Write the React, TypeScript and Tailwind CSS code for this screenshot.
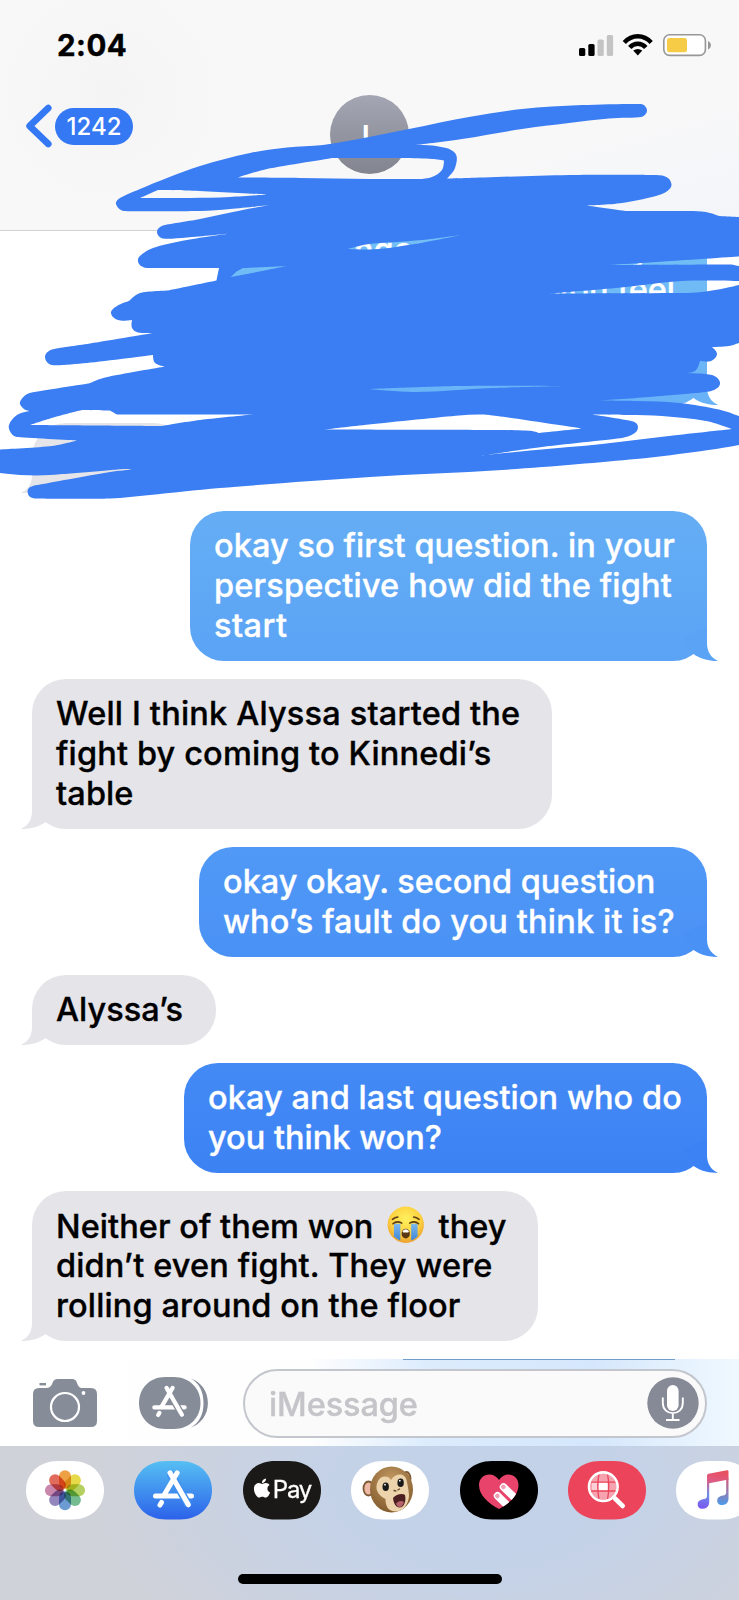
import React from "react";
import { FaApple } from "react-icons/fa";

type Pt = [number, number] | [number, number, 1];

// Closed smooth curve through the points; a third value of 1 marks a sharp corner.
function smooth(pts: Pt[]): string {
  const n = pts.length;
  const at = (i: number) => pts[(i + n) % n];
  const dist = (u: Pt, v: Pt) => Math.hypot(v[0] - u[0], v[1] - u[1]);
  let d = `M${pts[0][0]} ${pts[0][1]}`;
  for (let i = 0; i < n; i++) {
    const a = at(i);
    const b = at(i + 1);
    const p = at(i - 1);
    const q = at(i + 2);
    const len = dist(a, b);
    const tangent = (u: Pt, v: Pt, near: number) => {
      const l = dist(u, v) || 1;
      const k = Math.min(len, near * 1.5) * 0.34;
      return [((v[0] - u[0]) / l) * k, ((v[1] - u[1]) / l) * k];
    };
    const ta = a[2] ? [0, 0] : tangent(p, b, dist(p, a));
    const tb = b[2] ? [0, 0] : tangent(a, q, dist(b, q));
    d += `C${a[0] + ta[0]} ${a[1] + ta[1]} ${b[0] - tb[0]} ${b[1] - tb[1]} ${b[0]} ${b[1]}`;
  }
  return d + "Z";
}

const outline: Pt[] = [
  [641, 104], [582, 105], [522, 109], [469, 117], [409, 129], [369, 137], [323, 145], [287, 147.5], [250, 153], [200, 166], [167, 178], [140, 189],
  [120, 198], [116, 204], [124, 211], [200, 211], [230, 209], [270, 205, 1], [233, 212], [200, 219], [163, 225.5], [157, 232], [163, 238.5],
  [187, 237.5], [230, 233.5, 1], [187, 240], [153, 248], [139, 257], [139, 264], [147, 268], [219, 268, 1], [216.5, 280.5, 1], [168, 290.5, 1], [140, 293],
  [129, 301, 1], [117, 306], [111, 313], [118, 320], [132, 320, 1], [132, 328], [138, 332.5], [153, 333, 1], [90, 343.5], [52, 349.5], [45, 357],
  [52, 365], [87, 363], [153, 355, 1], [155, 363], [165, 366.5, 1], [117, 375], [100, 379], [89, 383.5, 1], [30, 393], [20, 402], [24, 409],
  [30, 411, 1], [17, 415], [9, 425], [11, 433], [17, 437], [77, 440.5, 1], [52, 446], [0, 449.5], [-10, 450, 1], [-10, 473, 1], [0, 473],
  [20, 475], [50, 475], [123, 469, 1], [133, 469.5, 1], [110, 472], [43, 484], [29, 488], [29, 496], [37, 498.5], [110, 498.5], [150, 495],
  [220, 488], [370, 477], [502, 470], [636, 459], [702, 451], [739, 445], [750, 442, 1], [750, 420, 1], [739, 416], [719, 409.5],
  [679, 403], [636, 401], [599, 400.5, 1], [649, 397], [709, 391.5], [720, 384], [712, 375], [682, 373, 1], [695, 371], [700, 361, 1], [711, 361], [717, 354],
  [712, 347, 1], [729, 346], [739, 343], [750, 340, 1], [750, 281, 1], [739, 285], [706, 291.5], [679, 293], [549, 293.5, 1], [616, 288],
  [682, 281], [739, 281], [750, 281, 1], [750, 266, 1], [739, 266], [731, 264.5], [609, 265, 1], [656, 262], [739, 256.5], [750, 256, 1], [750, 217, 1],
  [739, 217], [719, 216, 1], [706, 212], [689, 211], [626, 211, 1], [586, 205.5, 1], [622, 203], [659, 195], [671, 187], [668, 178], [656, 175], [569, 175], [469, 178],
  [447, 178.5, 1], [455, 168], [455, 153], [436, 146], [416, 145, 1], [462, 139], [522, 129], [569, 123], [609, 118.5], [641, 117], [647, 110.5],
];

const gaps: Pt[][] = [
  [[238, 177.5, 1], [267, 169], [333, 158, 1], [369, 158], [402, 158], [432, 159], [444, 160.5, 1], [442, 170], [432, 177], [421, 179, 1], [369, 179], [300, 178]],
  [[140, 198, 1], [158, 190, 1], [187, 190.5], [267, 194.5, 1], [230, 197], [190, 198]],
  [[348, 249, 1], [369, 244], [422, 240], [461, 235, 1], [426, 242], [389, 248], [369, 249.5]],
  [[231, 277, 1], [236, 272], [243, 268, 1], [287, 266, 1], [262, 271]],
  [[369, 389, 1], [459, 386], [567, 386, 1], [492, 388], [416, 392]],
  [[325, 429.5, 1], [369, 424.5], [459, 415.5], [489, 415], [582, 428.5, 1], [539, 433, 1], [532, 431], [502, 430]],
  [[592, 414.5, 1], [629, 415], [662, 416], [706, 421], [732, 429, 1], [669, 436], [602, 444], [536, 450], [482, 455.5, 1], [542, 447], [622, 438], [636, 432], [637, 424], [626, 420]],
  [[82, 410, 1], [110, 410.5, 1], [117, 414.5, 1], [253, 414.5, 1], [200, 420], [162, 426, 1], [30, 425, 1], [55, 417]],
];

const scribblePath = [outline, ...gaps].map(smooth).join("");

function Scribble() {
  return (
    <svg className="pointer-events-none absolute top-0 left-0 z-20" width="739" height="520" viewBox="0 0 739 520">
      <path d={scribblePath} fill="#3b7df2" fillRule="evenodd" />
    </svg>
  );
}

function StatusIcons() {
  return (
    <svg width="133" height="23" viewBox="579 34 133 23">
      <rect x="579" y="48" width="6.3" height="8" rx="1.6" />
      <rect x="588.3" y="44" width="6.3" height="12" rx="1.6" />
      <rect x="597.5" y="39.5" width="6.3" height="16.5" rx="1.6" fill="#c4c4c4" />
      <rect x="606.8" y="35" width="6.3" height="21" rx="1.6" fill="#c4c4c4" />
      <g fill="none" stroke="#000" strokeWidth="4.4">
        <path d="M624.3 42.5C632 34.2 643.5 34.2 651.2 42.5" />
        <path d="M629.8 47.5C634 42.4 641.6 42.4 645.8 47.5" />
      </g>
      <path d="M633.2 50.6Q637.8 47.6 642.3 50.6L637.8 55.6Z" />
      <rect x="663.8" y="34.8" width="41.6" height="20.6" rx="5.8" fill="#fff" stroke="#979797" strokeWidth="1.6" />
      <rect x="667" y="38" width="20" height="14.3" rx="2.4" fill="#f6cc47" />
      <path d="M708 41Q711 42.5 711 45.2T708 49.4Z" fill="#979797" />
    </svg>
  );
}

function Header() {
  return (
    <header className="relative z-10 h-[231px] border-b border-[#cfd1d3] bg-[#f8f8f9] bg-[radial-gradient(circle_at_110px_95px,#f4f4f5_0,#f8f8f900_110px),linear-gradient(165deg,#f8f8f900_70%,#f2f5f9_100%)]">
      <div className="flex h-[90px] items-start justify-between pt-[34px] pr-[27px] pl-[57px]">
        <span className="w-[72px] text-[29.5px] leading-[23px] font-bold tracking-[0.5px] whitespace-nowrap text-black [-webkit-text-stroke:0.4px_currentColor]">2:04</span>
        <StatusIcons />
      </div>
      <div className="grid grid-cols-3 items-start px-[26px]">
        <div className="flex items-center pt-[14px]">
          <svg width="29" height="44" viewBox="0 0 29 44">
            <path d="M22.3 4L3.6 22L22.3 40" fill="none" stroke="#3478f3" strokeWidth="6.6" strokeLinecap="round" strokeLinejoin="round" />
          </svg>
          <span className="flex h-[37px] w-[78px] items-center justify-center rounded-full bg-[#3478f3] pt-px text-[24px] font-medium text-white">1242</span>
        </div>
        <div className="mx-auto mt-[5px] h-[79px] w-[79px] rounded-full bg-linear-to-b from-[#a4a7b3] to-[#82858f] pt-[23px] pl-[31px] text-[35px] leading-[40px] font-medium text-white">
          L
        </div>
      </div>
    </header>
  );
}

function Tail({ side, className }: { side: "left" | "right"; className: string }) {
  return (
    <svg
      className={side === "right" ? `absolute -right-[11px] bottom-0 ${className}` : `absolute bottom-0 -left-[11px] -scale-x-100 ${className}`}
      width="39"
      height="36"
      viewBox="-28 -36 39 36"
    >
      <path d="M0 -34L0 -18C0 -9 4 -3.5 11 0C3 0 -6 -1.500 -13.500 -7L-24 -24Z" fill="currentColor" />
    </svg>
  );
}

function Bubble({ side, box, tail, children }: { side: "left" | "right"; box: string; tail: string; children?: React.ReactNode }) {
  return (
    <div
      className={`relative shrink-0 rounded-[34px] px-[24px] py-[15px] text-[32.5px] leading-[40px] font-medium whitespace-nowrap [-webkit-text-stroke:0.35px_currentColor] ${
        side === "right" ? "self-end text-white" : "self-start bg-[#e5e4e9] text-black"
      } ${box}`}
    >
      {children}
      <Tail side={side} className={tail} />
    </div>
  );
}

function Crying() {
  return (
    <svg className="mx-[13.8px] inline-block align-[-6px]" width="37.500" height="37.500" viewBox="0 0 38 38" role="img" aria-label="loudly crying face">
      <defs>
        <radialGradient id="face" cx=".5" cy=".35" r=".65">
          <stop offset="0" stopColor="#fff15f" />
          <stop offset=".65" stopColor="#fccf3e" />
          <stop offset="1" stopColor="#eda02f" />
        </radialGradient>
        <linearGradient id="tear" x1="0" y1="0" x2="0" y2="1">
          <stop offset="0" stopColor="#7fb9ee" />
          <stop offset="1" stopColor="#3c86d8" />
        </linearGradient>
      </defs>
      <circle cx="19" cy="19" r="18.4" fill="url(#face)" />
      <path d="M7 18H13.5V35Q9.5 33.3 7 31ZM24.5 18H31V31Q28.5 33.6 24.5 35Z" fill="url(#tear)" />
      <path d="M5.5 13.5Q8 11.5 11 11.2M32.5 13.5Q30 11.5 27 11.2M6 18Q10 14.5 15 17.4M32 18Q28 14.5 23 17.4" fill="none" stroke="#5d3b12" strokeWidth="1.6" strokeLinecap="round" />
      <ellipse cx="19" cy="28" rx="4.2" ry="5" fill="#5b3814" />
      <path d="M15.7 25.5Q19 21.5 22.3 25.5L21.5 26.8H16.5Z" fill="#fff" />
    </svg>
  );
}

function Conversation() {
  return (
    <main className="-mt-[16px] flex h-[1144px] flex-col gap-[18px] overflow-hidden px-[32px]">
      <Bubble side="right" box="h-[190px] w-[482px] bg-linear-to-b from-[#74c0f5] to-[#69b2f7]" tail="text-[#69b2f7]">
        <div className="flex justify-between pr-[33px] pl-[105px]">
          <span>nges</span>
          <span>y</span>
        </div>
        <div className="pr-[8px] text-right">you feel</div>
      </Bubble>
      <Bubble side="left" box="h-[70px] w-[156px]" tail="text-[#e5e4e9]" />
      <Bubble side="right" box="h-[150px] w-[517px] bg-linear-to-b from-[#65aef5] to-[#5ba3f5]" tail="text-[#5ba3f5]">
        <p className="tracking-[0.08px]">okay so first question. in your</p>
        <p className="tracking-[0.16px]">perspective how did the fight</p>
        <p className="tracking-[0.4px]">start</p>
      </Bubble>
      <Bubble side="left" box="h-[150px] w-[520px]" tail="text-[#e5e4e9]">
        <p className="tracking-[0.18px]">Well I think Alyssa started the</p>
        <p className="tracking-[0.15px]">fight by coming to Kinnedi’s</p>
        <p className="tracking-[0.1px]">table</p>
      </Bubble>
      <Bubble side="right" box="h-[110px] w-[508px] bg-linear-to-b from-[#5099f6] to-[#4a91f5]" tail="text-[#4a91f5]">
        <p>okay okay. second question</p>
        <p className="tracking-[0.17px]">who’s fault do you think it is?</p>
      </Bubble>
      <Bubble side="left" box="h-[70px] w-[184px]" tail="text-[#e5e4e9]">
        <p>Alyssa’s</p>
      </Bubble>
      <Bubble side="right" box="h-[110px] w-[523px] bg-linear-to-b from-[#438af5] to-[#3d82f4]" tail="text-[#3d82f4]">
        <p className="tracking-[0.08px]">okay and last question who do</p>
        <p>you think won?</p>
      </Bubble>
      <Bubble side="left" box="h-[150px] w-[506px]" tail="text-[#e5e4e9]">
        <p className="h-[40px] tracking-[0.06px]">
          Neither of them won<Crying />they
        </p>
        <p className="tracking-[0.13px]">didn’t even fight. They were</p>
        <p className="tracking-[0.13px]">rolling around on the floor</p>
      </Bubble>
    </main>
  );
}

function StoreMark({ gap }: { gap: string }) {
  return (
    <g fill="none" stroke="#fff" strokeWidth="5" strokeLinecap="round">
      <path d="M21.5 35H57.5M27.5 41.5L26 44" />
      <path d="M36 12L54.3 43.8" stroke={gap} strokeWidth="8" strokeLinecap="butt" />
      <path d="M43.2 11.8L29.8 34.6M36 11.8L54.3 43.8" />
    </g>
  );
}

function Compose() {
  return (
    <section className="h-[87px] bg-[linear-gradient(90deg,#ffffff_0%,#fefefe_42%,#dcecfd_58%,#d5e7fc_80%,#e9f4fe_95%,#f0f8ff_100%)]">
      <div className="ml-[403px] h-px w-[272px] bg-[#6f9ec9]" />
      <div className="flex h-[86px] items-center pr-[32px] pl-[33px]">
        <svg width="64" height="50" viewBox="0 0 64 50">
          <path d="M6 10H13Q18 10 19.500 5Q20.500 1 25 1H39Q43 1 44 5Q45.500 10 49 10H58Q64 10 64 16V43Q64 49 58 49H6Q0 49 0 43V16Q0 10 6 10Z" fill="#868d99" />
          <circle cx="32" cy="29" r="14" fill="none" stroke="#fff" strokeWidth="2.2" />
          <circle cx="50.500" cy="15" r="1.900" fill="#fff" />
          <rect x="6.500" y="5" width="6.500" height="2.400" fill="#868d99" />
        </svg>
        <svg className="ml-[42px]" width="70" height="52" viewBox="0 0 70 52">
          <path d="M26 0H35C50 0 61.500 11 61.500 26S50 52 35 52H26C11 52 0 41 0 26S11 0 26 0Z" fill="#868d99" />
          <path d="M51.700 1.500C62 5 68.900 14 68.900 26S62 47 51.700 50.500C60 46 64.500 38 64.500 26S60 6 51.700 1.500Z" fill="#868d99" />
          <g transform="translate(-2.7 1) scale(.84)">
            <StoreMark gap="#868d99" />
          </g>
        </svg>
        <div className="ml-[34px] flex h-[69px] flex-1 items-center justify-between rounded-full border-2 border-[#c3c6cc] bg-[#fafafa] pr-[6px] pl-[24px]">
          <span className="mt-[4px] text-[32.5px] leading-[36px] font-medium tracking-[-0.1px] text-[#c5c5c9] [-webkit-text-stroke:0.4px_currentColor]">iMessage</span>
          <svg className="-mt-[1px]" width="52" height="52" viewBox="0 0 52 52">
            <circle cx="26" cy="26" r="25.700" fill="#868a96" />
            <rect x="20" y="8" width="11.600" height="26" rx="5.800" fill="#fff" />
            <path d="M15.800 20.500V26C15.800 39.500 35.800 39.500 35.800 26V20.500M25.800 36V43M19 43H32.500" fill="none" stroke="#fff" strokeWidth="1.900" />
          </svg>
        </div>
      </div>
    </section>
  );
}

function Pill({ fill, children }: { fill: string; children?: React.ReactNode }) {
  return (
    <svg className="shrink-0" width="78" height="59" viewBox="0 0 78 59">
      <path d="M32 0H46C65 0 78 12.500 78 29.250S65 58.500 46 58.500H32C13 58.500 0 46 0 29.250S13 0 32 0Z" fill={fill} />
      {children}
    </svg>
  );
}

const petals = ["#eea045", "#e6d94a", "#b4d05e", "#74bb90", "#6c9bd2", "#9386bd", "#c987ad", "#e26c5c"];

function Tray() {
  return (
    <footer className="h-[154px] overflow-hidden bg-[#d0d2d9] bg-[radial-gradient(ellipse_260px_150px_at_480px_40px,#c3d2e8_0%,#c4d2e8_55%,#c8d0e000_150%)] pt-[15px] pl-[26px]">
      <div className="flex h-[59px] gap-[30.4px]">
        <Pill fill="#fff">
          {petals.map((c, i) => (
            <rect key={c} x="33" y="9.200" width="12" height="18.600" rx="6" fill={c} transform={`rotate(${i * 45} 39 29.200)`} className="mix-blend-multiply" />
          ))}
        </Pill>
        <Pill fill="url(#store)">
          <defs>
            <linearGradient id="store" x1="0" y1="0" x2="0" y2="1">
              <stop offset="0" stopColor="#56bff3" />
              <stop offset="1" stopColor="#2c62ea" />
            </linearGradient>
          </defs>
          <StoreMark gap="#4190ef" />
        </Pill>
        <div className="relative flex h-[59px] w-[78px] shrink-0 items-center">
          <div className="absolute inset-0">
            <Pill fill="#1a1917" />
          </div>
          <FaApple className="relative -mt-[5px] ml-[8px] text-white" size={22} />
          <span className="relative -mt-px text-[24px] leading-none tracking-[-1.2px] text-white [-webkit-text-stroke:0.3px_currentColor]">Pay</span>
        </div>
        <Pill fill="#fff">
          <defs>
            <radialGradient id="fur" cx=".5" cy=".3" r=".75">
              <stop offset="0" stopColor="#c39a62" />
              <stop offset="1" stopColor="#80592c" />
            </radialGradient>
          </defs>
          <ellipse cx="17.500" cy="27.500" rx="5" ry="7" fill="#efb9a8" stroke="#7d5a33" strokeWidth="1.800" />
          <ellipse cx="55.500" cy="17.500" rx="4" ry="6.500" fill="#c99a7c" stroke="#7d5a33" strokeWidth="1.800" />
          <ellipse cx="40.500" cy="28.500" rx="21.500" ry="23" fill="url(#fur)" />
          <path d="M40 19C45 11.500 54 12 55.500 19C56.500 24 57.500 28 58 34C58 43 52 50.500 45 50.500C37 50.500 34.500 45 34.500 38C27 34 23 28 27 20C30 14.500 37 14 40 19Z" fill="#ecd3ab" />
          <ellipse cx="34.700" cy="25.700" rx="3.200" ry="4.300" fill="#191919" />
          <ellipse cx="49.600" cy="21.700" rx="3.200" ry="4.300" fill="#191919" />
          <circle cx="34" cy="23.700" r=".9" fill="#fff" />
          <circle cx="48.800" cy="19.700" r=".9" fill="#fff" />
          <path d="M43 29.500L44.800 30M47 28.800L48.500 28" stroke="#6a4a2a" strokeWidth="1.400" strokeLinecap="round" />
          <path d="M42 37C45 33.500 51 32 54 34C55.500 40 53 46.500 48.500 46.500C44 46.500 42.500 41 42 37Z" fill="#4c1f22" />
          <path d="M45 42.500Q49 38.500 53 41Q51.500 46 48.500 46Q46 46 45 42.500Z" fill="#b5626a" />
        </Pill>
        <Pill fill="#000">
          <defs>
            <clipPath id="heart">
              <path d="M39 48C28 42 19 34 19 24C19 12 34 10 39 19C44 10 58.500 12 58.500 24C58.500 34 50 42 39 48Z" />
            </clipPath>
          </defs>
          <g clipPath="url(#heart)">
            <rect width="78" height="59" fill="#e8446b" />
            <g strokeLinecap="round" fill="none">
              <path d="M43.500 26L58 40M37.500 34.800L52 49" stroke="#fff" strokeWidth="7.500" />
              <path d="M43.300 25.800L43.500 26M37.300 34.800L37.500 35" stroke="#f0a0b3" strokeWidth="4.500" />
            </g>
          </g>
        </Pill>
        <Pill fill="#eb445b">
          <circle cx="35.300" cy="25.700" r="13" fill="#f6a3af" />
          <path d="M31 21H39.500V30H31ZM24 21H31V30H24Z" fill="#fbd0d6" />
          <rect x="31" y="21.500" width="8.500" height="8" fill="#fff" />
          <path d="M31 13Q28.500 25 31 38.500M39.500 13Q42 25 39.500 38.500M23 21.200H48M23 30H48" fill="none" stroke="#eb445b" strokeWidth="1.300" />
          <circle cx="35.300" cy="25.700" r="14.300" fill="none" stroke="#fff" strokeWidth="2.600" />
          <path d="M47 37.500L54.700 45" stroke="#fff" strokeWidth="4.600" strokeLinecap="round" />
          <path d="M44.500 35L48 38.500" stroke="#fff" strokeWidth="2.600" />
        </Pill>
        <Pill fill="#fff">
          <defs>
            <linearGradient id="note" x1=".6" y1="0" x2=".4" y2="1">
              <stop offset="0" stopColor="#e8505f" />
              <stop offset=".3" stopColor="#dd5b86" />
              <stop offset=".65" stopColor="#6f8fe8" />
              <stop offset="1" stopColor="#7a5cf0" />
            </linearGradient>
            <linearGradient id="noteRight" x1="0" y1="0" x2="0" y2="1">
              <stop offset="0" stopColor="#dc5878" />
              <stop offset="1" stopColor="#4c9bea" />
            </linearGradient>
          </defs>
          <path d="M31 14.500Q31 13.200 32.500 12.800L51 9.200Q52.500 9 52.500 10.500V18.500L33.200 22.200V41C33.200 45 31 47.500 27 47.800C23 48 21.500 45.500 21.700 43C22 39.500 25 38.500 28 38Q31 37.500 31 35Z" fill="url(#note)" />
          <path d="M50.200 17H52.500V37.500C52.500 41.500 50 43.800 46.500 44C43 44.200 41 42 41.200 39.500C41.500 36 44 35 47 34.500Q50.200 34 50.200 31.500Z" fill="url(#noteRight)" />
        </Pill>
      </div>
      <div className="mt-[54px] ml-[212px] h-[10px] w-[264px] rounded-full bg-black" />
    </footer>
  );
}

export default function App() {
  return (
    <div className="relative h-[1600px] w-[739px] overflow-hidden bg-white font-['Inter',sans-serif]">
      <Header />
      <Conversation />
      <Compose />
      <Tray />
      <Scribble />
    </div>
  );
}
